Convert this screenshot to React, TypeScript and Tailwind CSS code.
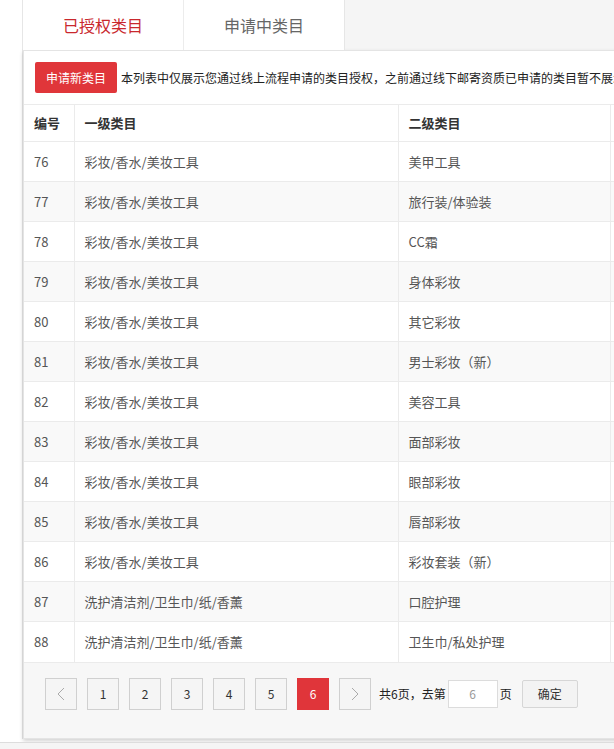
const rows: [number, string, string][] = [
  [76, "彩妆/香水/美妆工具", "美甲工具"],
  [77, "彩妆/香水/美妆工具", "旅行装/体验装"],
  [78, "彩妆/香水/美妆工具", "CC霜"],
  [79, "彩妆/香水/美妆工具", "身体彩妆"],
  [80, "彩妆/香水/美妆工具", "其它彩妆"],
  [81, "彩妆/香水/美妆工具", "男士彩妆（新）"],
  [82, "彩妆/香水/美妆工具", "美容工具"],
  [83, "彩妆/香水/美妆工具", "面部彩妆"],
  [84, "彩妆/香水/美妆工具", "眼部彩妆"],
  [85, "彩妆/香水/美妆工具", "唇部彩妆"],
  [86, "彩妆/香水/美妆工具", "彩妆套装（新）"],
  [87, "洗护清洁剂/卫生巾/纸/香薰", "口腔护理"],
  [88, "洗护清洁剂/卫生巾/纸/香薰", "卫生巾/私处护理"],
];

const Chevron = ({ dir }: { dir: "left" | "right" }) => (
  <svg width="8" height="14" viewBox="0 0 8 14" fill="none">
    <polyline
      points={dir === "left" ? "7,1 1,7 7,13" : "1,1 7,7 1,13"}
      stroke="#aaa"
      strokeWidth="1"
    />
  </svg>
);

const PageBtn = ({ children, active }: { children: React.ReactNode; active?: boolean }) => (
  <div
    className={
      active
        ? "w-[32px] h-[32px] flex items-center justify-center bg-[#e0353a] text-white text-[12px]"
        : "w-[32px] h-[32px] flex items-center justify-center border border-[#d0d0d0] bg-[#f5f5f5] text-[#333] text-[12px]"
    }
  >
    {children}
  </div>
);

export default function App() {
  return (
    <div
      className="w-[614px] h-[749px] overflow-hidden bg-white flex flex-col"
      style={{ fontFamily: "'Noto Sans CJK SC', 'Liberation Sans', sans-serif" }}
    >
      <div className="ml-[22px] border-l border-[#e6e6e6] w-[700px] shrink-0">
        {/* tabs */}
        <div className="flex h-[50px] bg-[#f5f5f5]">
          <div className="w-[161px] h-[50px] bg-white flex items-center justify-center text-[16px] text-[#c9282d] border-r border-[#ececec]">
            已授权类目
          </div>
          <div className="w-[161px] h-[50px] bg-white flex items-center justify-center text-[16px] text-[#666] border-r border-[#e6e6e6]">
            申请中类目
          </div>
          <div className="flex-1" />
        </div>

        {/* panel */}
        <div className="bg-white border border-[#e4e4e4] shadow-[0_2px_4px_rgba(0,0,0,0.18)]">
          <div className="h-[53px] flex items-center pl-[11px] gap-[4px]">
            <button className="w-[82px] h-[31px] shrink-0 rounded-[2px] bg-[#e0363a] text-white text-[12px]">
              申请新类目
            </button>
            <span className="text-[12px] text-[#222] whitespace-nowrap">
              本列表中仅展示您通过线上流程申请的类目授权，之前通过线下邮寄资质已申请的类目暂不展示
            </span>
          </div>

          <table className="border-collapse text-[13px] w-[676px] table-fixed">
            <colgroup>
              <col className="w-[50px]" />
              <col className="w-[324px]" />
              <col className="w-[212px]" />
              <col />
            </colgroup>
            <thead>
              <tr className="h-[37px] border-t border-[#ebebeb]">
                <th className="text-left font-bold text-[#333] pl-[10px] border-r border-[#ebebeb]">编号</th>
                <th className="text-left font-bold text-[#333] pl-[10px] border-r border-[#ebebeb]">一级类目</th>
                <th className="text-left font-bold text-[#333] pl-[10px] border-r border-[#ebebeb]">二级类目</th>
                <th />
              </tr>
            </thead>
            <tbody>
              {rows.map(([id, a, b], i) => (
                <tr
                  key={id}
                  className={
                    i % 2 === 1
                      ? "h-[40px] border-t border-[#ebebeb] bg-[#f9f9f9]"
                      : "h-[40px] border-t border-[#ebebeb] bg-white"
                  }
                >
                  <td className="pl-[10px] text-[#555] border-r border-[#ebebeb]">{id}</td>
                  <td className="pl-[10px] text-[#555] border-r border-[#ebebeb]">{a}</td>
                  <td className="pl-[10px] text-[#555] border-r border-[#ebebeb]">{b}</td>
                  <td />
                </tr>
              ))}
            </tbody>
          </table>

          {/* pagination */}
          <div className="h-[76px] bg-[#f7f7f7] border-t border-[#ebebeb] flex items-center pl-[21px] pb-[12px]">
            <div className="flex items-center gap-[10px]">
              <PageBtn>
                <Chevron dir="left" />
              </PageBtn>
              <PageBtn>1</PageBtn>
              <PageBtn>2</PageBtn>
              <PageBtn>3</PageBtn>
              <PageBtn>4</PageBtn>
              <PageBtn>5</PageBtn>
              <PageBtn active>6</PageBtn>
              <PageBtn>
                <Chevron dir="right" />
              </PageBtn>
            </div>
            <span className="ml-[8px] text-[12px] text-[#222] whitespace-nowrap">共6页，去第</span>
            <div className="ml-[2px] w-[50px] h-[28px] bg-white border border-[#dcdcdc] flex items-center justify-center text-[12px] text-[#999]">
              6
            </div>
            <span className="ml-[2px] text-[12px] text-[#222]">页</span>
            <button className="ml-[10px] w-[56px] h-[28px] border border-[#d6d6d6] bg-[#f3f3f3] rounded-[2px] text-[12px] text-[#333]">
              确定
            </button>
          </div>
        </div>
      </div>
      <div className="mt-[3px] flex-1 border-t border-[#dddddd] bg-[#f5f5f5]" />
    </div>
  );
}
